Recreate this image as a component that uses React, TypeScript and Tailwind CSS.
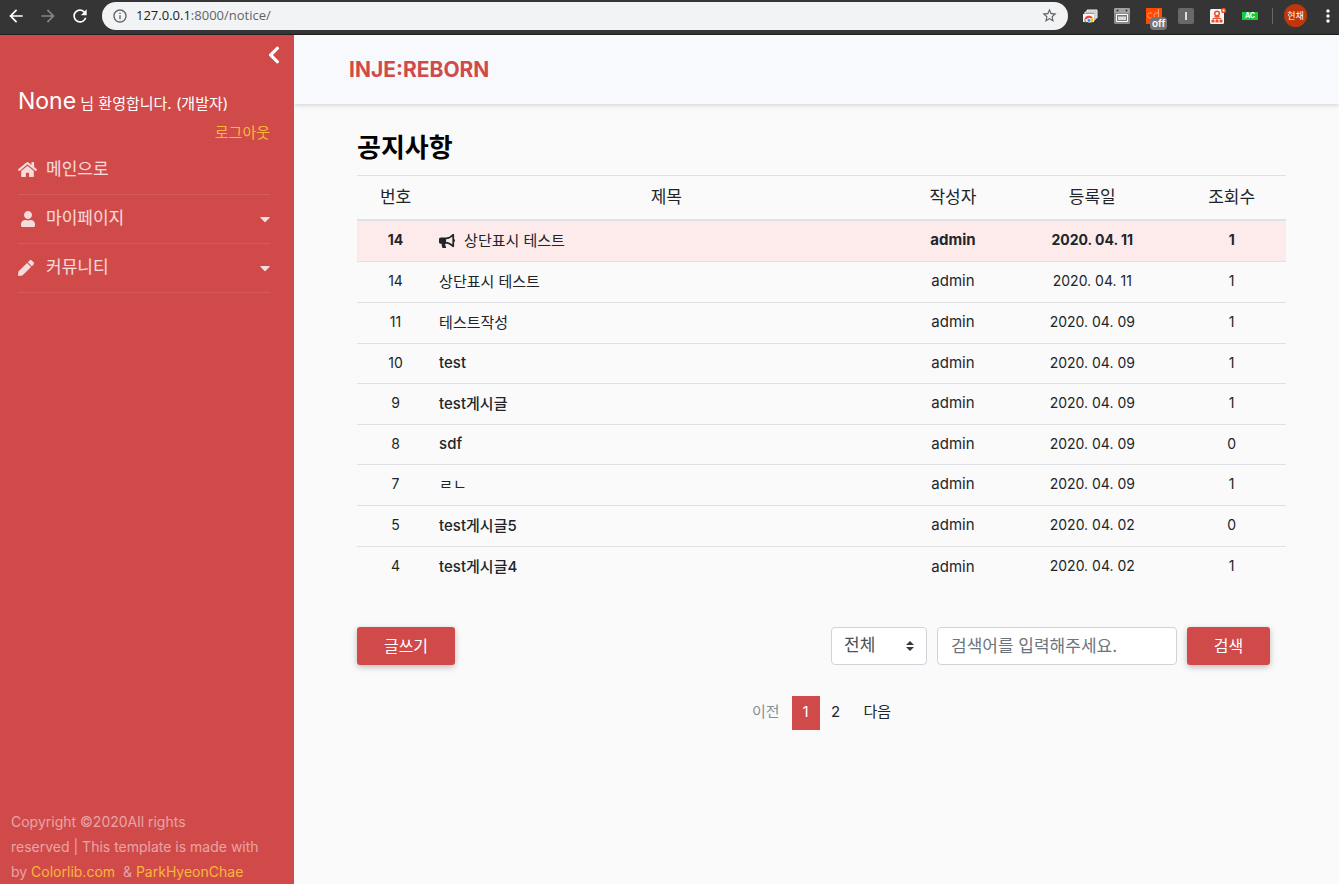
import type { ReactNode } from "react";
import {
  FaBullhorn,
  FaCaretDown,
  FaChevronLeft,
  FaHome,
  FaPen,
  FaUser,
} from "react-icons/fa";
import {
  MdArrowBack,
  MdArrowForward,
  MdInfoOutline,
  MdMoreVert,
  MdRefresh,
  MdStarBorder,
} from "react-icons/md";

type Notice = {
  no: number;
  title: string;
  date: string;
  views: number;
  pinned?: boolean;
};

const notices: Notice[] = [
  { no: 14, title: "상단표시 테스트", date: "2020. 04. 11", views: 1, pinned: true },
  { no: 14, title: "상단표시 테스트", date: "2020. 04. 11", views: 1 },
  { no: 11, title: "테스트작성", date: "2020. 04. 09", views: 1 },
  { no: 10, title: "test", date: "2020. 04. 09", views: 1 },
  { no: 9, title: "test게시글", date: "2020. 04. 09", views: 1 },
  { no: 8, title: "sdf", date: "2020. 04. 09", views: 0 },
  { no: 7, title: "ㄹㄴ", date: "2020. 04. 09", views: 1 },
  { no: 5, title: "test게시글5", date: "2020. 04. 02", views: 0 },
  { no: 4, title: "test게시글4", date: "2020. 04. 02", views: 1 },
];

// Rows with Latin-only titles are slightly shorter than rows with Hangul.
const isLatin = (text: string) => /^[a-z0-9 ]+$/i.test(text);
const hasLatin = (text: string) => /[a-z]/i.test(text);

function rowHeight(n: Notice) {
  if (n.pinned) return "h-[42px]";
  return isLatin(n.title) ? "h-10" : "h-[41px]";
}

function Extensions() {
  return (
    <div className="flex items-center gap-4">
      <button aria-label="Chrome windows">
        <svg width="16" height="16" viewBox="0 0 16 16">
          <path d="M5 2h10v8H5z" fill="#bdbdbd" stroke="#f5f5f5" />
          <path d="M3 4h10v8H3z" fill="#9e9e9e" stroke="#eee" />
          <path d="M1 6h11v8H1z" fill="#f5f5f5" />
          <path d="M2.5 12a4.5 4.5 0 0 1 8.5-1.8L7 10z" fill="#ea4335" />
          <path d="M2.4 11l2.4 3.5H3.4a4 4 0 0 1-1-3.5z" fill="#34a853" />
          <path d="M11 10.2a4 4 0 0 1-.6 4.3H7l1.5-4.3z" fill="#fbbc05" />
          <circle cx="7" cy="12.3" r="1.9" fill="#4285f4" stroke="#fff" strokeWidth=".7" />
        </svg>
      </button>
      <button aria-label="Capture">
        <svg width="16" height="16" viewBox="0 0 16 16">
          <rect width="16" height="16" rx="1.5" fill="#8c8c8c" />
          <rect width="16" height="5" rx="1.5" fill="#a2a2a2" />
          <circle cx="3.5" cy="2.5" r="1" fill="#333" />
          <circle cx="12.5" cy="2.5" r="1" fill="#333" />
          <path d="M2.5 6.500h11v7h-11z" fill="#777" stroke="#fff" />
          <path d="M4 8.500h8v3.500H4z" fill="#ddd" />
        </svg>
      </button>
      <button aria-label="cdm" className="relative size-4 bg-[#ff4a00]">
        <svg width="16" height="16" viewBox="0 0 16 16" fill="none" stroke="#ffa27c">
          <path d="M6 5H3.500Q1.500 5 1.500 7.500T3.500 10H6M12.500 1v9M12.500 5H10Q8 5 8 7.500T10 10h2.500" />
        </svg>
        <span className="absolute left-1 top-[9px] rounded-sm bg-[#757575] px-[2px] text-[10px] font-semibold leading-[13px] text-white">
          off
        </span>
      </button>
      <button aria-label="I" className="flex size-4 items-center justify-center rounded-xs bg-[#696969]">
        <span className="h-2 w-[2px] bg-[#ddd]" />
      </button>
      <button aria-label="Site map" className="-mr-[2px]">
        <svg width="18" height="16" viewBox="0 0 18 16">
          <rect y="1" width="14" height="15" rx="1.5" fill="#f7f7f7" />
          <path d="M7 7v5M3 12v-1.500h8V12" fill="none" stroke="#e8502f" />
          <circle cx="7" cy="5.500" r="2.300" fill="none" stroke="#e8502f" strokeWidth="1.500" />
          <path d="M4.500 8h5v1.500h-5zM1.500 12h3v2.500h-3zM5.500 12h3v2.500h-3zM9.500 12h3v2.500h-3z" fill="#e8502f" />
          <circle cx="13.500" cy="2.500" r="1.800" fill="#fff" stroke="#f4511e" strokeWidth="1.500" />
        </svg>
      </button>
      <button aria-label="AC" className="h-2 w-4 bg-[#1bcb3c] text-[7px] font-bold leading-[8px] text-white">
        AC
      </button>
    </div>
  );
}

function BrowserBar() {
  return (
    <div className="flex h-[35px] shrink-0 items-center border-b border-[#202020] bg-[#353535] pb-[3px] pr-px text-white">
      <div className="flex items-center gap-3 pl-[6px]">
        <button aria-label="Back"><MdArrowBack size={20} /></button>
        <button aria-label="Forward"><MdArrowForward size={20} className="text-[#858585]" /></button>
        <button aria-label="Reload"><MdRefresh size={20} /></button>
      </div>
      <div className="ml-3 flex h-7 flex-1 items-center rounded-full bg-[#f1f3f4] px-[10px] text-[#5f6368]">
        <MdInfoOutline size={16} />
        <span className="ml-2 flex-1 font-['Open_Sans',sans-serif] text-[13px]">
          <span className="text-[#202124]">127.0.0.1</span>:8000/notice/
        </span>
        <MdStarBorder size={17} />
      </div>
      <div className="flex items-center pl-[14px]">
        <Extensions />
        <span className="ml-[14px] h-4 w-px bg-[#686868]" />
        <button className="ml-[11px] size-[23px] rounded-full bg-[#bf360c] text-[9px] text-white">현채</button>
        <button aria-label="Menu" className="ml-[11px]"><MdMoreVert size={20} /></button>
      </div>
    </div>
  );
}

function MenuItem({ icon, label, caret }: { icon: ReactNode; label: string; caret?: boolean }) {
  return (
    <li className="border-b border-white/10">
      <a href="#" className="flex h-12 items-center pb-px text-[17px] text-white/80">
        <span className="w-7 shrink-0">{icon}</span>
        <span className="flex-1">{label}</span>
        {caret && <FaCaretDown size={16} className="-mr-[3px]" />}
      </a>
    </li>
  );
}

function Sidebar() {
  return (
    <aside className="relative z-10 flex w-[294px] shrink-0 flex-col bg-[#d14a4a] text-white">
      <button aria-label="메뉴 닫기" className="mr-[10px] mt-[10px] self-end">
        <FaChevronLeft size={20} />
      </button>
      <div className="mt-[19px] px-[18px]">
        <p className="text-[15px] leading-[34px]">
          <span className="text-[23px]">None</span> 님 환영합니다. (개발자)
        </p>
        <p className="mr-[6px] text-right text-[15px] leading-6">
          <a href="#" className="text-[#f8b739]">로그아웃</a>
        </p>
        <ul className="mr-[6px] mt-px">
          <MenuItem icon={<FaHome size={19} />} label="메인으로" />
          <MenuItem icon={<FaUser size={16} className="ml-[2px]" />} label="마이페이지" caret />
          <MenuItem icon={<FaPen size={16} />} label="커뮤니티" caret />
        </ul>
      </div>
      <footer className="mt-auto pl-[11px] pr-3 text-[14px] leading-[25px] text-white/50">
        Copyright ©2020All rights
        <br />
        reserved | This template is made with
        <br />
        by <a href="#" className="text-[#f8b739]">Colorlib.com</a> &nbsp;&amp;{" "}
        <a href="#" className="text-[#f8b739]">ParkHyeonChae</a>
      </footer>
    </aside>
  );
}

function NoticeTable() {
  return (
    <table className="w-full table-fixed text-center text-[14px] text-[#212529]">
      <colgroup>
        <col className="w-[8.3%]" />
        <col className="w-[50%]" />
        <col className="w-[11.7%]" />
        <col className="w-[18.3%]" />
        <col className="w-[11.7%]" />
      </colgroup>
      <thead>
        <tr className="h-11 border-b-2 border-t border-b-[#dee2e6] border-t-[#dee2e6] text-[17px]">
          <th className="font-normal">번호</th>
          <th className="font-normal">제목</th>
          <th className="font-normal">작성자</th>
          <th className="font-normal">등록일</th>
          <th className="font-normal">조회수</th>
        </tr>
      </thead>
      <tbody>
        {notices.map((n, i) => (
          <tr
            key={i}
            className={`border-b border-[#dee2e6] last:border-b-0 ${rowHeight(n)} ${
              n.pinned ? "bg-[#fdebeb] font-bold" : ""
            }`}
          >
            <td className="pb-[3px]">{n.no}</td>
            <td className={`pl-[5px] text-left text-[15px] ${hasLatin(n.title) ? "font-medium" : "font-normal"}`}>
              <a href="#" className="flex items-center">
                {n.pinned && <FaBullhorn size={16} className="mr-[9px]" />}
                {n.title}
              </a>
            </td>
            <td className="pb-px text-[15px]">admin</td>
            <td className="pb-[3px]">{n.date}</td>
            <td className="pb-[3px]">{n.views}</td>
          </tr>
        ))}
      </tbody>
    </table>
  );
}

const redButton =
  "h-[38px] rounded-[3px] bg-[#d14a4a] text-[16px] text-white shadow-[0_2px_6px_rgba(0,0,0,0.25)]";

export default function App() {
  return (
    <div className="flex min-h-screen flex-col bg-[#fafafa] font-[Inter,'Noto_Sans_CJK_KR',sans-serif]">
      <BrowserBar />
      <div className="flex flex-1">
        <Sidebar />
        <div className="min-w-0 flex-1">
          <header className="flex h-[69px] items-center bg-[#f8f9fc] pl-[55px] shadow-[0_1px_5px_rgba(0,0,0,0.18)]">
            <a href="#" className="text-[21px] font-bold text-[#d14a4a]">INJE:REBORN</a>
          </header>
          <main className="pl-[63px] pr-[53px] pt-6">
            <h1 className="h-[47px] text-[26px] font-bold leading-10 text-black">공지사항</h1>
            <NoticeTable />
            <div className="mr-4 mt-[39px] flex items-center gap-[10px]">
              <button className={`${redButton} mr-auto w-[98px]`}>글쓰기</button>
              <div className="relative">
                <select
                  aria-label="검색 범위"
                  className="h-[38px] w-24 appearance-none rounded-sm border border-[#ced4da] bg-white pl-3 text-[17px] text-[#495057]"
                >
                  <option>전체</option>
                </select>
                <svg
                  className="pointer-events-none absolute right-[13px] top-[14px]"
                  width="8"
                  height="10"
                  viewBox="0 0 4 5"
                  fill="#343a40"
                >
                  <path d="M2 0L0 2h4zm0 5L0 3h4z" />
                </svg>
              </div>
              <input
                aria-label="검색어"
                placeholder="검색어를 입력해주세요."
                className="h-[38px] w-60 rounded-sm border border-[#ced4da] bg-white px-[13px] text-[17px] placeholder:text-[#6c757d]"
              />
              <button className={`${redButton} w-[83px]`}>검색</button>
            </div>
            <nav className="mt-[31px] flex h-[34px] items-stretch justify-center text-[15px] text-[#212529]">
              <button disabled className="px-3 text-[#868e96]">이전</button>
              <button aria-current="page" className="w-7 bg-[#d14a4a] text-white">1</button>
              <button className="w-8">2</button>
              <button className="px-3">다음</button>
            </nav>
          </main>
        </div>
      </div>
    </div>
  );
}
